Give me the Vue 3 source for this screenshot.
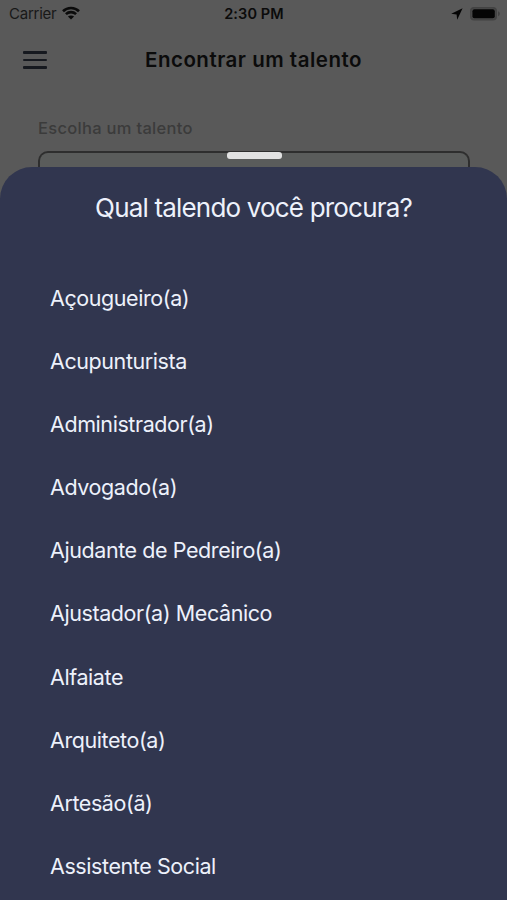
<script setup>
const talents = [
  'Açougueiro(a)',
  'Acupunturista',
  'Administrador(a)',
  'Advogado(a)',
  'Ajudante de Pedreiro(a)',
  'Ajustador(a) Mecânico',
  'Alfaiate',
  'Arquiteto(a)',
  'Artesão(ã)',
  'Assistente Social',
]
</script>

<template>
  <main class="screen">
    <div class="status">
      <div class="carrier">
        <span>Carrier</span>
        <svg class="wifi" viewBox="0 0 18 14" width="18" height="14">
          <path d="M1 5.2C5.4 0.9 12.6 0.9 17 5.2" />
          <path d="M3.9 8.1C6.8 5.4 11.2 5.4 14.1 8.1" />
          <path class="dot" d="M9 13.6L5.9 10.6C7.6 9 10.4 9 12.1 10.6Z" />
        </svg>
      </div>
      <span class="time">2:30 PM</span>
      <div class="indicators">
        <svg viewBox="0 0 12 12" width="12" height="12">
          <path d="M11.6 0.3L0.2 5.8L5.6 6.4L6.2 11.8Z" />
        </svg>
        <svg viewBox="0 0 32 16" width="32" height="16">
          <rect x="1" y="1" width="27" height="13.4" rx="4" fill="#434343" />
          <rect x="2.6" y="2.6" width="23.8" height="10.2" rx="3" fill="#4d4d4d" />
          <rect x="3.4" y="3.2" width="22.4" height="9" rx="2" />
          <path d="M29 5.2C31.4 6.2 31.4 9.2 29 10.2Z" fill="#434343" />
        </svg>
      </div>
    </div>
    <header class="header">
      <div class="menu"><i /><i /><i /></div>
      <h1>Encontrar um talento</h1>
    </header>
    <div class="form">
      <label>Escolha um talento</label>
      <div class="field"><span class="handle" /></div>
    </div>
    <section class="sheet">
      <h2>Qual talendo você procura?</h2>
      <ul>
        <li v-for="name in talents" :key="name">{{ name }}</li>
      </ul>
    </section>
  </main>
</template>

<style>
body { background: #595959; overflow: hidden; }
</style>

<style scoped>
.screen {
  display: flex;
  flex-direction: column;
  width: 507px;
  height: 900px;
  overflow: hidden;
  background: #595959;
  color: #0b0b0b;
  font-family: Inter, "Liberation Sans", sans-serif;
}
.status {
  display: grid;
  grid-template-columns: 1fr auto 1fr;
  align-items: center;
  height: 27px;
  flex: none;
  padding: 0 6px 0 9px;
  font-size: 15px;
}
.carrier { display: flex; align-items: center; gap: 6px; color: #181818; letter-spacing: -0.25px; }
.wifi { fill: none; stroke: #0b0b0b; stroke-width: 2.6; margin-top: -2px; }
.wifi .dot { fill: #0b0b0b; stroke: none; }
.time { font-weight: 600; font-size: 14.5px; padding-right: 2px; letter-spacing: 0.1px; }
.indicators { display: flex; align-items: center; justify-content: flex-end; gap: 6px; fill: #050505; }
.header {
  display: grid;
  grid-template-columns: 24px 1fr 24px;
  align-items: center;
  flex: none;
  height: 65px;
  padding: 0 23px;
}
.menu { display: flex; flex-direction: column; gap: 5px; padding-top: 1px; }
.menu i { height: 2.5px; border-radius: 1px; background: #16191f; }
h1 { margin: 0; text-align: center; font-size: 20.5px; font-weight: 600; letter-spacing: 0.5px; white-space: nowrap; }
.form {
  display: flex;
  flex-direction: column;
  flex: none;
  height: 75px;
  padding: 0 37px 0 38px;
}
label { height: 59px; line-height: 73px; font-size: 16.5px; font-weight: 500; letter-spacing: 0.3px; color: #3b3b3b; }
.field {
  position: relative;
  height: 16px;
  box-sizing: border-box;
  border: 2px solid #2e2e2e;
  border-bottom: 0;
  border-radius: 10px 10px 0 0;
  background: #5a5c5b;
}
.handle {
  position: absolute;
  left: 187px;
  top: -1px;
  width: 55px;
  height: 7px;
  border-radius: 3px;
  background: #e2e2e2;
}
.sheet {
  flex: 1;
  border-radius: 32px 32px 0 0;
  background: #31364f;
  color: #edf1fb;
}
h2 { margin: 0; height: 100px; line-height: 82px; text-align: center; font-size: 26px; font-weight: 400; letter-spacing: -0.82px; white-space: nowrap; }
ul { margin: 0; padding: 0 0 0 50px; list-style: none; }
li { height: 63.1px; line-height: 63px; font-size: 21.5px; letter-spacing: -0.42px; white-space: nowrap; }
</style>
